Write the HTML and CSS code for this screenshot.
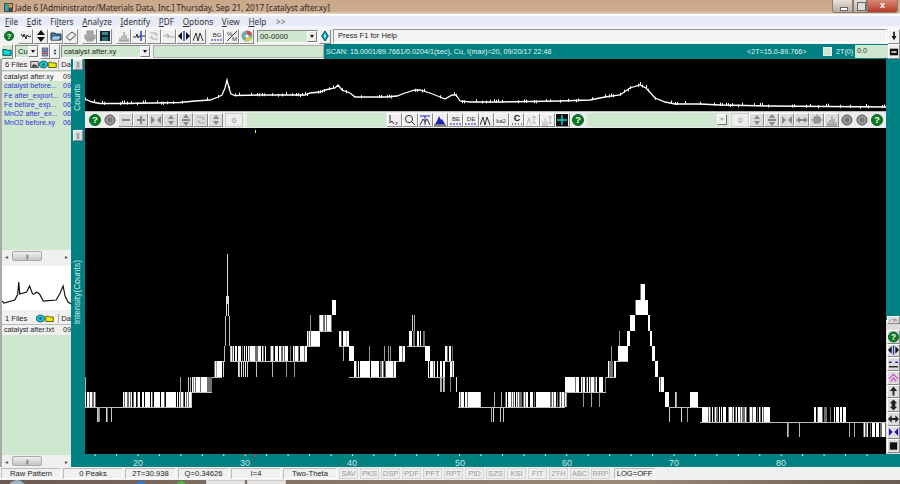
FILE: index.html
```html
<!DOCTYPE html>
<html lang="en">
<head>
    <meta charset="UTF-8">
    <title>Jade 6 [Administrator/Materials Data, Inc.]</title>
    <link rel="stylesheet" href="styles.css">
</head>
<body>
    <!-- shared toolbar icons -->
    <svg class="defs" xmlns="http://www.w3.org/2000/svg">
        <symbol id="help" viewBox="0 0 12 12"><circle cx="6" cy="6" r="5.5" fill="#0b7a1c" stroke="#063"/><text x="6" y="9.4" text-anchor="middle" class="ic-help">?</text></symbol>
        <symbol id="wave" viewBox="0 0 12 12"><path d="M1 4l2 3 1-3 2 5 1-4 2 2 2-1" fill="none" stroke="#222"/></symbol>
        <symbol id="updown" viewBox="0 0 12 12"><path d="M6 0l4 5H2zM6 12l4-5H2z" fill="#111"/></symbol>
        <symbol id="folder" viewBox="0 0 12 12"><path d="M1 3h4l1 1h5v6H1z" fill="#3a7fa8" stroke="#234"/><path d="M3 6h8l-2 4H1z" fill="#a8d0e8" stroke="#234" stroke-width=".5"/></symbol>
        <symbol id="eraser" viewBox="0 0 12 12"><path d="M1 7l6-5 4 3-6 5z" fill="#eee" stroke="#555"/><path d="M1 7l4 3 6-5v1l-6 5-4-3z" fill="#999"/></symbol>
        <symbol id="printer" viewBox="0 0 12 12"><path d="M3 1h6v3H3zM1 5h10v4H1zM3 8h6v3H3z" fill="#aaa" stroke="#999"/></symbol>
        <symbol id="disk" viewBox="0 0 12 12"><path d="M1 1h10v10H1z" fill="#123"/><path d="M3 2h6v3H3z" fill="#3a8a8a"/><path d="M3 7h6v4H3z" fill="#2a6a6a"/></symbol>
        <symbol id="bars" viewBox="0 0 12 12"><path d="M1 11h10M2 11V8M4 11V6M6 11V2M8 11V5M10 11V8" fill="none" stroke="#888"/></symbol>
        <symbol id="wave-blue" viewBox="0 0 12 12"><path d="M0 7h3l1-3 1 4 1-2h6" fill="none" stroke="#333"/><path d="M8 1v10" stroke="#2233cc" stroke-width="1.4"/></symbol>
        <symbol id="cycle" viewBox="0 0 12 12"><path d="M2 3h6v3l2-2M10 9H4V6L2 8" fill="none" stroke="#aaa"/></symbol>
        <symbol id="wave-gray" viewBox="0 0 12 12"><path d="M0 6h3l1-2 1 4 1-3 1 2h5" fill="none" stroke="#aaa"/></symbol>
        <symbol id="lr-blue" viewBox="0 0 12 12"><path d="M0 6l4-4v8zM12 6L8 2v8z" fill="#111"/><path d="M6 1v10" stroke="#2233cc" stroke-width="1.4"/></symbol>
        <symbol id="peaks" viewBox="0 0 12 12"><path d="M0 11l3-8 2 8 2-8 3 8" fill="none" stroke="#333"/></symbol>
        <symbol id="bg" viewBox="0 0 12 12"><text x="6" y="7" text-anchor="middle" class="ic-txt">BG</text><path d="M0 10h12" stroke="#22c" stroke-dasharray="2 1"/></symbol>
        <symbol id="percent" viewBox="0 0 12 12"><path d="M1 11L11 1" stroke="#444"/><text x="1" y="6" class="ic-txt">%</text><text x="6" y="11" class="ic-txt">M</text></symbol>
        <symbol id="cd" viewBox="0 0 12 12"><circle cx="6" cy="6" r="5.5" fill="#7aa"/><path d="M6 6L6 .5A5.5 5.5 0 0 1 11 4z" fill="#d44"/><path d="M6 6L11 8A5.5 5.5 0 0 1 4 11z" fill="#dc4"/><circle cx="6" cy="6" r="1.6" fill="#fff"/></symbol>
        <symbol id="diamond" viewBox="0 0 12 12"><path d="M6 0l4 6-4 6-4-6z" fill="#0aa" stroke="#034"/><path d="M6 3l1.5 3L6 9 4.5 6z" fill="#aff"/></symbol>
        <symbol id="arrow-down" viewBox="0 0 12 12"><path d="M5 1h2v5h2l-3 5-3-5h2z" fill="#111"/></symbol>
        <symbol id="arrow-up" viewBox="0 0 12 12"><path d="M5 11h2V6h3L6 1 2 6h3z" fill="#222"/></symbol>
        <symbol id="folder-teal" viewBox="0 0 12 12"><path d="M1 3h4l1 1h5v6H1z" fill="#0dd" stroke="#033"/></symbol>
        <symbol id="book" viewBox="0 0 12 12"><path d="M2 0h8v12H2z" fill="#9ab" stroke="#234"/><path d="M3 3h6M3 5h6" stroke="#33c"/><path d="M3 8h6" stroke="#c33" stroke-width="2"/></symbol>
        <symbol id="spin" viewBox="0 0 12 12"><path d="M6 2l2 3H4zM6 10l2-3H4z" fill="#111"/></symbol>
        <symbol id="photo" viewBox="0 0 12 12"><path d="M1 2h10v8H1z" fill="#ddd" stroke="#222"/><path d="M2 9l3-4 2 2 1-1 2 3z" fill="#333"/></symbol>
        <symbol id="eye" viewBox="0 0 12 12"><ellipse cx="6" cy="6" rx="5.5" ry="4.5" fill="#1cc" stroke="#034"/><circle cx="6" cy="6" r="1.6" fill="#037"/></symbol>
        <symbol id="folder-yellow" viewBox="0 0 12 12"><path d="M1 3h4l1 1h5v6H1z" fill="#ee0" stroke="#330"/></symbol>
        <symbol id="rail" viewBox="0 0 12 12"><path d="M4 3h4M4 6h4M4 9h4" stroke="#333"/></symbol>
        <symbol id="ring" viewBox="0 0 12 12"><circle cx="6" cy="6" r="5" fill="#999" stroke="#555"/><circle cx="6" cy="6" r="2.4" fill="#777"/></symbol>
        <symbol id="minus" viewBox="0 0 12 12"><path d="M2 5h8v2H2z" fill="#888"/></symbol>
        <symbol id="plus" viewBox="0 0 12 12"><path d="M5 2h2v3h3v2H7v3H5V7H2V5h3z" fill="#888"/></symbol>
        <symbol id="lr" viewBox="0 0 12 12"><path d="M5 6L1 2v8zM7 6l4-4v8z" fill="#888"/></symbol>
        <symbol id="ud" viewBox="0 0 12 12"><path d="M6 1l3 4H3zM6 11l3-4H3z" fill="#888"/></symbol>
        <symbol id="udbar" viewBox="0 0 12 12"><path d="M6 0l3 4H3zM6 12l3-4H3zM2 5h8v2H2z" fill="#888"/></symbol>
        <symbol id="lrbar" viewBox="0 0 12 12"><path d="M0 6l4-3v6zM12 6L8 3v6zM4 5h4v2H4z" fill="#888"/></symbol>
        <symbol id="box" viewBox="0 0 12 12"><path d="M3 3h6v6H3zM0 6h3M9 6h3M6 0v3" fill="#999" stroke="#888"/></symbol>
        <symbol id="cursor" viewBox="0 0 12 12"><path d="M1 1v8l2-2 2 3" fill="none" stroke="#333"/><text x="6" y="11" class="ic-txt">z</text></symbol>
        <symbol id="zoom" viewBox="0 0 12 12"><circle cx="5" cy="5" r="3.6" fill="none" stroke="#333"/><path d="M8 8l3 3" stroke="#333"/></symbol>
        <symbol id="tee" viewBox="0 0 12 12"><path d="M1 2h10M6 2v9" stroke="#22c"/><path d="M1 11l3-6 2 3 2-3 3 6" fill="none" stroke="#333"/></symbol>
        <symbol id="hill" viewBox="0 0 12 12"><path d="M1 10l2-3 2-5 2 4 1-1 3 5z" fill="#2222bb"/><path d="M0 11h12" stroke="#111"/></symbol>
        <symbol id="be" viewBox="0 0 12 12"><text x="6" y="7" text-anchor="middle" class="ic-txt">BE</text><path d="M0 10h12" stroke="#22c" stroke-dasharray="2 1"/></symbol>
        <symbol id="de" viewBox="0 0 12 12"><text x="6" y="7" text-anchor="middle" class="ic-txt">DE</text><path d="M0 10h12" stroke="#22c" stroke-dasharray="2 1"/></symbol>
        <symbol id="ka" viewBox="0 0 12 12"><text x="6" y="9" text-anchor="middle" class="ic-txt">ka2</text></symbol>
        <symbol id="clabel" viewBox="0 0 12 12"><text x="6" y="7" text-anchor="middle" class="ic-bold">C</text><path d="M1 10h10" stroke="#111" stroke-dasharray="1 2"/></symbol>
        <symbol id="at-gray" viewBox="0 0 12 12"><path d="M1 11l2-7 2 7M8 2v8M6 4l2-2 2 2M6 8l2 2 2-2" fill="none" stroke="#bbb"/></symbol>
        <symbol id="lt-gray" viewBox="0 0 12 12"><path d="M1 11h6M2 11V7M4 11V4M6 11V7M9 2v8M7.500 4L9 2l1.500 2M7.500 8L9 10l1.500-2" fill="none" stroke="#bbb"/></symbol>
        <symbol id="grid" viewBox="0 0 12 12"><path d="M0 0h12v12H0z" fill="#111"/><path d="M6 1v10M1 6h10" stroke="#1cc" stroke-width="1.4"/></symbol>
        <symbol id="gauge" viewBox="0 0 12 12"><path d="M1 8q5-6 10 0" fill="none" stroke="#999"/><path d="M6 8l3-3" stroke="#c33"/></symbol>
        <symbol id="lines-yellow" viewBox="0 0 12 12"><path d="M1 4h3M8 4h3" stroke="#22c" stroke-width="1.6"/><path d="M1 9h10" stroke="#111" stroke-width="1.4"/></symbol>
        <symbol id="chevron-pink" viewBox="0 0 12 12"><path d="M1 7l5-5 5 5M3 10l3-4 3 4" fill="none" stroke="#c4c" stroke-width="1.3"/></symbol>
        <symbol id="lr-plain" viewBox="0 0 12 12"><path d="M0 6l4-4v8zM12 6L8 2v8zM4 5h4v2H4z" fill="#222"/></symbol>
        <symbol id="lr-b" viewBox="0 0 12 12"><path d="M5 6L1 2v8zM7 6l4-4v8z" fill="#11c"/></symbol>
        <symbol id="ud-bar" viewBox="0 0 12 12"><path d="M6 0l4 4H2zM6 12l4-4H2zM4 4h4v4H4z" fill="#222"/></symbol>
        <symbol id="square" viewBox="0 0 12 12"><path d="M2 2h8v8H2z" fill="#111"/></symbol>
        <symbol id="mini-square" viewBox="0 0 12 12"><path d="M1 2h10v8H1z" fill="#111"/><path d="M3 5h6v2H3z" fill="#ddd"/></symbol>
    </svg>

    <header class="titlebar">
        <svg class="app-icon" viewBox="0 0 10 10"><path d="M0 0h10v10H0z" fill="#445"/><path d="M1 1h4v8H1z" fill="#3a9"/><path d="M5 1h4v4H5z" fill="#d94"/></svg>
        <span class="title-text">Jade 6 [Administrator/Materials Data, Inc.] Thursday, Sep 21, 2017 [catalyst after.xy]</span>
        <div class="win-buttons">
            <span class="win-btn win-min"></span>
            <span class="win-btn win-max"></span>
            <span class="win-btn win-close">x</span>
        </div>
    </header>

    <nav class="menubar">
        <span><u>F</u>ile</span>
        <span><u>E</u>dit</span>
        <span>Fi<u>l</u>ters</span>
        <span><u>A</u>nalyze</span>
        <span><u>I</u>dentify</span>
        <span><u>P</u>DF</span>
        <span><u>O</u>ptions</span>
        <span><u>V</u>iew</span>
        <span><u>H</u>elp</span>
        <span class="menu-more">&gt;&gt;</span>
    </nav>

    <div class="toolbar">
        <button class="btn flat first"><svg><use href="#help"/></svg></button>
        <div class="btn-group gap3">
            <button class="btn"><svg><use href="#wave"/></svg></button>
            <button class="btn"><svg><use href="#updown"/></svg></button>
            <button class="btn"><svg><use href="#folder"/></svg></button>
            <button class="btn"><svg><use href="#eraser"/></svg></button>
        </div>
        <div class="btn-group gap4">
            <button class="btn"><svg><use href="#printer"/></svg></button>
            <button class="btn"><svg><use href="#disk"/></svg></button>
        </div>
        <div class="btn-group gap4">
            <button class="btn"><svg><use href="#bars"/></svg></button>
            <button class="btn"><svg><use href="#wave-blue"/></svg></button>
            <button class="btn"><svg><use href="#cycle"/></svg></button>
            <button class="btn"><svg><use href="#wave-gray"/></svg></button>
            <button class="btn"><svg><use href="#lr-blue"/></svg></button>
            <button class="btn"><svg><use href="#peaks"/></svg></button>
        </div>
        <div class="btn-group gap3">
            <button class="btn"><svg><use href="#bg"/></svg></button>
            <button class="btn"><svg><use href="#percent"/></svg></button>
            <button class="btn"><svg><use href="#cd"/></svg></button>
        </div>
        <div class="combo pdf-combo"><span class="combo-text">00-0000</span><span class="combo-arrow"></span></div>
        <button class="btn small"><svg><use href="#diamond"/></svg></button>
        <div class="help-field">Press F1 for Help</div>
        <button class="btn small"><svg><use href="#arrow-down"/></svg></button>
    </div>

    <div class="filebar">
        <button class="btn small first-file"><svg><use href="#folder-teal"/></svg></button>
        <div class="combo cu-combo"><span class="combo-text">Cu</span><span class="combo-arrow"></span></div>
        <button class="btn tiny"><svg><use href="#book"/></svg></button>
        <button class="btn tiny"><svg><use href="#spin"/></svg></button>
        <div class="combo file-combo"><span class="combo-text">catalyst after.xy</span><span class="combo-arrow"></span></div>
        <div class="green-field"></div>
        <div class="scan-bar">
            <span class="scan-text">SCAN: 15.0001/89.7661/0.0204/1(sec), Cu, I(max)=20, 09/20/17 22:48</span>
            <span class="scan-range">&lt;2T=15.0-89.766&gt;</span>
            <span class="scan-check"></span>
            <span class="scan-label">2T(0)</span>
            <span class="scan-input">0.0</span>
            <button class="btn small"><svg><use href="#mini-square"/></svg></button>
        </div>
    </div>

    <main class="workspace">
        <aside class="side">
            <div class="list-head">
                <span class="head-name">6 Files <svg><use href="#photo"/></svg><svg><use href="#eye"/></svg><svg><use href="#folder-yellow"/></svg></span>
                <span class="head-date">Da</span>
            </div>
            <ul class="file-list top-list">
                <li class="selected"><span>catalyst after.xy</span><span class="date">09</span></li>
                <li><span>catalyst before...</span><span class="date">09</span></li>
                <li><span>Fe after_export...</span><span class="date">09</span></li>
                <li><span>Fe before_exp...</span><span class="date">06</span></li>
                <li><span>MnO2 after_ex...</span><span class="date">06</span></li>
                <li><span>MnO2 before.xy</span><span class="date">06</span></li>
            </ul>
            <div class="hscroll"><span class="hs-arrow">◂</span><span class="hs-thumb">⦀</span><span class="hs-arrow">▸</span></div>
            <div class="preview">
                <svg viewBox="0 0 70 44" preserveAspectRatio="none"><polyline points="0,35 2,37 13,34 16,28 17,16 18,28 25,26 28,20 31,28 33,28 35,26 38,28 42,35 55,34 59,27 62,20 64,30 67,36 70,38" fill="none" stroke="#111" stroke-width="1.2"/></svg>
            </div>
            <div class="list-head second">
                <span class="head-name">1 Files <span class="head-icons"><svg><use href="#eye"/></svg><svg><use href="#folder-yellow"/></svg></span></span>
                <span class="head-date">Da</span>
            </div>
            <ul class="file-list bottom-list">
                <li class="plain"><span>catalyst after.txt</span><span class="date">09</span></li>
            </ul>
            <div class="hscroll"><span class="hs-arrow">◂</span><span class="hs-thumb">⦀</span><span class="hs-arrow">▸</span></div>
        </aside>

        <div class="rail">
            <button class="btn rail-btn"><svg><use href="#rail"/></svg></button>
            <span class="rail-label counts">Counts</span>
            <button class="btn rail-btn rail-second"><svg><use href="#rail"/></svg></button>
            <span class="rail-label intensity">Intensity(Counts)</span>
        </div>

        <section class="center">
            <canvas class="overview" id="overview" width="801" height="52"></canvas>
            <div class="chart-tools">
                <button class="btn flat"><svg><use href="#help"/></svg></button>
                <button class="btn flat"><svg><use href="#ring"/></svg></button>
                <button class="btn grey ml"><svg><use href="#minus"/></svg></button>
                <button class="btn grey"><svg><use href="#plus"/></svg></button>
                <button class="btn grey"><svg><use href="#lr"/></svg></button>
                <button class="btn grey"><svg><use href="#ud"/></svg></button>
                <button class="btn grey"><svg><use href="#udbar"/></svg></button>
                <button class="btn grey"><svg><use href="#cycle"/></svg></button>
                <button class="btn grey"><svg><use href="#ud"/></svg></button>
                <span class="zero-field">0</span>
                <div class="tool-green"></div>
                <div class="btn-group mode-group">
                    <button class="btn"><svg><use href="#cursor"/></svg></button>
                    <button class="btn"><svg><use href="#zoom"/></svg></button>
                    <button class="btn"><svg><use href="#tee"/></svg></button>
                    <button class="btn"><svg><use href="#hill"/></svg></button>
                    <button class="btn"><svg><use href="#be"/></svg></button>
                    <button class="btn"><svg><use href="#de"/></svg></button>
                    <button class="btn"><svg><use href="#peaks"/></svg></button>
                    <button class="btn"><svg><use href="#ka"/></svg></button>
                    <button class="btn"><svg><use href="#clabel"/></svg></button>
                    <button class="btn"><svg><use href="#at-gray"/></svg></button>
                    <button class="btn"><svg><use href="#lt-gray"/></svg></button>
                    <button class="btn"><svg><use href="#grid"/></svg></button>
                    <button class="btn flat"><svg><use href="#help"/></svg></button>
                </div>
                <div class="tool-green wide"><span class="combo-arrow off"></span></div>
                <span class="zero-field">0</span>
                <button class="btn grey"><svg><use href="#ud"/></svg></button>
                <button class="btn grey"><svg><use href="#udbar"/></svg></button>
                <button class="btn grey"><svg><use href="#lr"/></svg></button>
                <button class="btn grey"><svg><use href="#lrbar"/></svg></button>
                <button class="btn grey"><svg><use href="#box"/></svg></button>
                <button class="btn grey"><svg><use href="#bars"/></svg></button>
                <button class="btn flat"><svg><use href="#ring"/></svg></button>
                <button class="btn flat"><svg><use href="#ring"/></svg></button>
                <button class="btn flat"><svg><use href="#help"/></svg></button>
            </div>
            <canvas class="plot" id="plot" width="801" height="324"></canvas>
        </section>

        <div class="right-rail">
            <button class="btn side-btn short"><svg><use href="#gauge"/></svg></button>
            <button class="btn side-btn"><svg><use href="#help"/></svg></button>
            <button class="btn side-btn"><svg><use href="#lr-blue"/></svg></button>
            <button class="btn side-btn"><svg><use href="#lines-yellow"/></svg></button>
            <button class="btn side-btn"><svg><use href="#chevron-pink"/></svg></button>
            <button class="btn side-btn"><svg><use href="#arrow-up"/></svg></button>
            <button class="btn side-btn"><svg><use href="#ud-bar"/></svg></button>
            <button class="btn side-btn"><svg><use href="#lr-plain"/></svg></button>
            <button class="btn side-btn"><svg><use href="#lr-b"/></svg></button>
            <button class="btn side-btn"><svg><use href="#square"/></svg></button>
        </div>

        <svg class="axis" viewBox="0 0 815 13">
            <path id="axisTicks" d="" stroke="#cfe" fill="none"/>
            <path d="M170 0v3" stroke="#e33" stroke-width="1.2"/>
            <text x="53" y="12">20</text>
            <text x="160" y="12">30</text>
            <text x="267" y="12">40</text>
            <text x="375" y="12">50</text>
            <text x="482" y="12">60</text>
            <text x="589" y="12">70</text>
            <text x="696" y="12">80</text>
        </svg>
    </main>

    <footer class="statusbar">
        <span class="cell c60">Raw Pattern</span>
        <span class="cell c60">0 Peaks</span>
        <span class="cell c51">2T=30.938</span>
        <span class="cell c51">Q=0.34626</span>
        <span class="cell c50">I=4</span>
        <span class="cell c53">Two-Theta</span>
        <span class="cell off">SAV</span>
        <span class="cell off">PKS</span>
        <span class="cell off">DSP</span>
        <span class="cell off">PDF</span>
        <span class="cell off">PFT</span>
        <span class="cell off">RPT</span>
        <span class="cell off">PID</span>
        <span class="cell off">SZS</span>
        <span class="cell off">KSI</span>
        <span class="cell off">FIT</span>
        <span class="cell off">2TH</span>
        <span class="cell off">ABC</span>
        <span class="cell off">RRP</span>
        <span class="cell log">LOG=OFF</span>
    </footer>

    <div class="taskbar">
        <span class="orb"></span>
        <span class="task-dot blue"></span>
        <span class="task-dot green"></span>
        <span class="task-tab"></span>
        <span class="task-tab"></span>
    </div>

    <script src="chart.js"></script>
</body>
</html>
```

FILE: styles.css
```css
/* General Styles */
* {
    box-sizing: border-box;
}

html, body {
    margin: 0;
    padding: 0;
    height: 484px;
    overflow: hidden;
}

body {
    width: 900px;
    display: flex;
    flex-direction: column;
    background: #f0f0f0;
    font-family: 'Liberation Sans', Arial, sans-serif;
    font-size: 7.6px;
    color: #222;
}

.defs {
    position: absolute;
    width: 0;
    height: 0;
}

.ic-help {
    font: bold 9px 'Liberation Sans', sans-serif;
    fill: #fff;
}

.ic-txt {
    font: 6px 'Liberation Sans', sans-serif;
    fill: #333;
}

.ic-bold {
    font: bold 9px 'Liberation Sans', sans-serif;
    fill: #111;
}

/* Title and menu */
.titlebar {
    height: 14px;
    display: flex;
    align-items: center;
    padding-left: 4px;
    background: linear-gradient(#c9a78a, #d0ad8e 80%, #e6d7c8);
}

.app-icon {
    width: 9px;
    height: 9px;
    margin-right: 2px;
}

.title-text {
    font-family: 'Noto Sans', sans-serif;
    font-size: 8.1px;
    color: #2a2a2a;
    white-space: nowrap;
}

.win-buttons {
    margin-left: auto;
    margin-right: 2px;
    display: flex;
    align-self: flex-start;
    height: 13px;
}

.win-btn {
    height: 13px;
    border: 1px solid #8a7a70;
    border-top: none;
    background: linear-gradient(#e8e0d8, #b8aca2);
}

.win-min {
    width: 21px;
    border-radius: 0 0 0 3px;
    position: relative;
}

.win-min::after {
    content: "";
    position: absolute;
    left: 7px;
    top: 7px;
    width: 6px;
    height: 2px;
    background: #fff;
    border: 1px solid #666;
}

.win-max {
    width: 14px;
    position: relative;
}

.win-max::after {
    content: "";
    position: absolute;
    left: 3px;
    top: 2px;
    width: 7px;
    height: 7px;
    border: 1px solid #666;
    background: #ddd;
}

.win-close {
    width: 31px;
    border-radius: 0 0 3px 0;
    background: linear-gradient(#d88a78, #b83a28);
    color: #fff;
    text-align: center;
    font-weight: bold;
    font-size: 9px;
    line-height: 10px;
}

.menubar {
    height: 14px;
    display: flex;
    align-items: center;
    gap: 8.7px;
    padding-left: 5px;
    background: linear-gradient(#fff 8%, #e6eaf6 20%, #e8ecf8 85%, #fff);
    font-family: 'Noto Sans', sans-serif;
    font-size: 8.2px;
    color: #333;
}

.menu-more {
    margin-left: 1px;
    color: #555;
}

/* Buttons */
.btn {
    width: 15px;
    height: 15px;
    flex: none;
    padding: 0;
    display: flex;
    align-items: center;
    justify-content: center;
    background: #f0f0f0;
    border: 1px solid;
    border-color: #fff #888 #888 #fff;
}

.btn svg {
    width: 12px;
    height: 12px;
    display: block;
}

.btn.flat {
    border-color: transparent;
    background: transparent;
}

.btn.grey {
    background: #dcdcdc;
}

.btn.small {
    width: 12px;
}

.btn.tiny {
    width: 10px;
}

.btn.tiny svg,
.btn.small svg {
    width: 10px;
}

.btn-group {
    display: flex;
}

.gap3 {
    margin-left: 3px;
}

.gap4 {
    margin-left: 4px;
}

.toolbar {
    height: 16px;
    display: flex;
    align-items: center;
    padding-left: 3px;
    background: #f0f0f0;
}

.first {
    width: 12px;
}

.first svg {
    width: 12px;
}

.combo {
    display: flex;
    align-items: center;
    height: 13px;
    background: #cfe6cf;
    border: 1px solid #888;
    border-right-color: #fff;
    border-bottom-color: #fff;
}

.combo-text {
    flex: 1;
    padding-left: 2px;
    white-space: nowrap;
    overflow: hidden;
}

.combo-arrow {
    width: 10px;
    height: 11px;
    background: #eee;
    border: 1px solid;
    border-color: #fff #777 #777 #fff;
    position: relative;
    flex: none;
}

.combo-arrow::after {
    content: "";
    position: absolute;
    left: 2px;
    top: 3px;
    border: 2.500px solid transparent;
    border-top: 3px solid #111;
}

.combo-arrow.off {
    margin-left: auto;
    margin-right: 2px;
}

.combo-arrow.off::after {
    border-top-color: #aaa;
}

.pdf-combo {
    width: 61px;
    margin-left: 3px;
    margin-right: 1px;
}

.help-field {
    width: 554px;
    height: 14px;
    margin: 0 1px 0 2px;
    padding-left: 4px;
    line-height: 12px;
    border: 1px solid #999;
    border-right-color: #fff;
    border-bottom-color: #fff;
    background: #f4f4f4;
}

.filebar {
    height: 15px;
    display: flex;
    align-items: center;
    background: #f0f0f0;
}

.first-file {
    margin-left: 1px;
    background: #cfe6cf;
}

.cu-combo {
    width: 24px;
    margin: 0 1px 0 2px;
}

.file-combo {
    width: 90px;
    margin-left: 1px;
    background: #cfe6cf;
}

.green-field {
    width: 171px;
    height: 13px;
    margin-left: 2px;
    background: #cfe6cf;
    border: 1px solid #aaa;
}

.scan-bar {
    flex: 1;
    height: 15px;
    display: flex;
    align-items: center;
    padding-left: 2px;
    background: #008080;
    color: #e4f4f4;
    font-size: 7.2px;
    white-space: nowrap;
}

.scan-text {
    width: 421px;
}

.scan-range {
    width: 76px;
}

.scan-check {
    width: 9px;
    height: 9px;
    background: #d0e8d0;
    border: 1px solid #eee;
}

.scan-label {
    margin-left: 4px;
    width: 19px;
}

.scan-input {
    width: 33px;
    height: 13px;
    padding-left: 2px;
    background: #cfe6cf;
    color: #333;
    line-height: 12px;
}

/* Main grid */
.workspace {
    height: 408px;
    display: grid;
    grid-template-columns: 71px 14px 801px 14px;
    grid-template-rows: 395px 13px;
    background: #008080;
}

.side {
    grid-row: 1 / 3;
    display: flex;
    flex-direction: column;
    border-left: 2px solid #aaa;
    background: #f0f0f0;
}

.list-head {
    height: 12px;
    flex: none;
    display: flex;
    align-items: center;
    background: #f0f0f0;
    border-bottom: 1px solid #bbb;
}

.list-head.second {
    margin-top: 3px;
}

.head-name {
    width: 58px;
    display: flex;
    align-items: center;
    padding-left: 3px;
    border-right: 1px solid #aaa;
    white-space: nowrap;
}

.head-name svg {
    width: 9px;
    height: 9px;
}

.head-name svg:first-of-type {
    margin-left: 3px;
}

.head-icons {
    display: flex;
    margin-left: 6px;
}

.head-date {
    padding-left: 2px;
}

.file-list {
    list-style: none;
    margin: 0;
    padding: 0;
    background: #cfe6cf;
    color: #3333dd;
    overflow: hidden;
}

.top-list {
    height: 179px;
    flex: none;
    padding-top: 1px;
}

.bottom-list {
    flex: 1;
}

.file-list li {
    height: 9.300px;
    display: flex;
    justify-content: space-between;
    padding-left: 2px;
    line-height: 9px;
    font-size: 7.200px;
    white-space: nowrap;
}

.file-list li.selected {
    background: #f4f4f4;
    color: #222;
}

.file-list li.plain {
    color: #222;
    height: 10px;
    background: #f0f0f0;
}

.file-list .date {
    width: 8px;
    overflow: hidden;
}

.hscroll {
    height: 12px;
    flex: none;
    display: flex;
    align-items: center;
    justify-content: space-between;
    padding: 0 3px;
    background: #f0f0f0;
    color: #555;
    font-size: 6px;
}

.hs-thumb {
    width: 30px;
    height: 10px;
    margin: 0 auto 0 4px;
    text-align: center;
    line-height: 10px;
    background: linear-gradient(#f0f0f0, #c4c4c4);
    border: 1px solid #aaa;
    border-radius: 2px;
}

.preview {
    height: 44px;
    flex: none;
    margin-top: 4px;
    background: #fff;
}

.preview svg {
    width: 100%;
    height: 100%;
    display: block;
}

.rail {
    grid-row: 1 / 3;
    position: relative;
    background: #008080;
}

.rail-btn {
    position: absolute;
    left: 2px;
    top: 0;
    width: 10px;
    height: 11px;
    background: #ddd;
}

.rail-btn.rail-second {
    top: 71px;
}

.rail-label {
    position: absolute;
    left: 1px;
    writing-mode: vertical-rl;
    transform: rotate(180deg);
    color: #cfe6e6;
    font-size: 8.500px;
    white-space: nowrap;
}

.counts {
    top: 25px;
}

.intensity {
    top: 201px;
}

.center {
    display: flex;
    flex-direction: column;
    background: #000;
}

.overview,
.plot {
    display: block;
    flex: none;
}

.chart-tools {
    height: 19px;
    flex: none;
    display: flex;
    align-items: center;
    padding: 0 0 2px 2px;
    background: linear-gradient(#bbb 0, #bbb 1px, #ececec 1px, #ececec 17px, #000 17px);
}

.chart-tools .btn {
    height: 14px;
}

.chart-tools .ml {
    margin-left: 1px;
}

.mode-group .btn {
    width: 15.250px;
}

.zero-field {
    width: 18px;
    height: 14px;
    margin-left: 2px;
    text-align: center;
    line-height: 13px;
    color: #888;
    background: #eee;
    border: 1px solid #ccc;
}

.tool-green {
    width: 139px;
    height: 14px;
    margin: 0 1px 0 4px;
    display: flex;
    align-items: center;
    background: #cfe6cf;
}

.tool-green.wide {
    width: 142px;
    margin: 0 0 0 2px;
}

.right-rail {
    display: flex;
    flex-direction: column;
    align-items: center;
    justify-content: flex-end;
    background: linear-gradient(#008080 261px, #dcdcdc 261px);
    padding-bottom: 1px;
}

.side-btn {
    width: 13px;
    height: 13.700px;
    background: #ddd;
}

.side-btn.short {
    height: 8px;
    margin-bottom: 6px;
}

.axis {
    grid-column: 3 / 5;
    width: 815px;
    height: 13px;
    display: block;
}

.axis text {
    font: 9px 'Liberation Sans', sans-serif;
    fill: #cfe6e6;
    text-anchor: middle;
}

/* Status bar and desktop */
.statusbar {
    height: 13px;
    flex: none;
    display: flex;
    gap: 2px;
    padding: 1px 0 0 1px;
    background: #f0f0f0;
}

.cell {
    height: 11px;
    text-align: center;
    line-height: 10px;
    border: 1px solid #ccc;
    border-color: #bbb #fff #fff #bbb;
}

.c60 { width: 60px; }
.c51 { width: 51px; }
.c50 { width: 50px; }
.c53 { width: 54px; }

.cell.off {
    width: 19px;
    color: #999;
    background: #eee;
    border: 1px solid #d4d4d4;
}

.cell.log {
    width: 41px;
    margin-left: 2px;
}

.taskbar {
    flex: 1;
    display: flex;
    align-items: flex-start;
    padding-left: 8px;
    background: linear-gradient(90deg, #6b5a52, #8a7868 40%, #9a8a78 70%, #6a5c50);
    overflow: hidden;
}

.orb {
    width: 18px;
    height: 18px;
    border-radius: 50%;
    background: #9ab4c8;
}

.task-dot {
    width: 10px;
    height: 10px;
    margin-top: 1px;
    border-radius: 50%;
}

.task-dot.blue {
    margin-left: 110px;
    background: #2a7fd8;
}

.task-dot.green {
    margin-left: 30px;
    background: #5ab04a;
}

.task-tab {
    width: 39px;
    height: 8px;
    margin-left: 2px;
    background: #e4e4e4;
    border: 1px solid #ccc;
}

.task-tab:nth-of-type(4) {
    margin-left: 20px;
}
```

FILE: chart.js
```js
// Draws the two scan traces and the axis ticks
var seed = 7;
function rnd() {
    seed = (seed * 16807) % 2147483647;
    return seed / 2147483647;
}

// intensity steps, page y of each count
var L0 = 437, L1 = 422, L2 = 407, L3 = 392, L4 = 377, L5 = 361, L6 = 346, L7 = 331, L8 = 315, L9 = 300, L10 = 284;

// x0, x1, top, bottom, fill density
var bands = [
    [85, 96, L3, L2, 0.6],
    [123, 180, L3, L2, 0.65],
    [180, 192, L3, L2, 0.55],
    [192, 212, L4, L3, 0.85],
    [214, 222, L5, L4, 0.7],
    [230, 307, L6, L5, 0.62],
    [307, 320, L7, L6, 0.75],
    [320, 332, L8, L7, 0.85],
    [332, 336, L9, L8, 0.7],
    [339, 350, L7, L6, 0.5],
    [349, 354, L6, L5, 0.9],
    [354, 396, L5, L4, 0.72],
    [399, 405, L6, L5, 0.95],
    [407, 425, L7, L6, 0.6],
    [425, 430, L6, L5, 0.9],
    [428, 445, L5, L4, 0.5],
    [445, 453, L6, L5, 0.55],
    [450, 455, L5, L4, 0.5],
    [459, 480, L3, L2, 0.75],
    [505, 566, L3, L2, 0.7],
    [565, 606, L4, L3, 0.62],
    [608, 616, L5, L4, 0.75],
    [618, 628, L6, L5, 0.95],
    [627, 630, L7, L6, 0.9],
    [630, 635, L8, L7, 1],
    [635, 648, L9, L8, 0.85],
    [640, 646, L10, L9, 0.7],
    [648, 650, L8, L7, 0.7],
    [650, 652, L7, L6, 0.7],
    [652, 655, L6, L5, 0.7],
    [655, 658, L5, L4, 0.9],
    [659, 664, L4, L3, 0.7],
    [665, 669, L3, L2, 1],
    [690, 698, L3, L2, 0.9],
    [702, 770, L2, L1, 0.6],
    [812, 846, L2, L1, 0.42],
    [863, 886, L1, L0, 0.62]
];

// runs of flat trace: x0, x1, y
var flats = [
    [85, 96, L2], [96, 123, L2], [123, 192, L2], [192, 212, L3], [212, 222, L4],
    [222, 225, L5], [230, 307, L5], [307, 320, L6], [320, 332, L7], [339, 349, L6],
    [349, 396, L4], [396, 405, L5], [407, 425, L6], [428, 445, L4], [445, 453, L5],
    [458, 505, L2], [505, 565, L2], [565, 606, L3], [606, 616, L4], [616, 628, L5],
    [669, 702, L2], [700, 886, L1]
];

// single spikes: x, y0, y1, grey level
var spikes = [
    [85, L4, L3, 170], [97, L2, L1, 200], [98, L2, L1, 170], [99, L2, L1, 140], [106, L2, L1, 220], [107, L2, L1, 120], [111, L2, L1, 200],
    [180, L4, L3, 160], [188, L4, L3, 200], [190, L4, L3, 170], [193, L4, L3, 130], [195, L4, L3, 110], [191, L3, L2, 200],
    [216, L5, L4, 160], [223, L5, L4, 220], [224, L6, L5, 230],
    [238, L5, L4, 230], [239, L5, L4, 180], [241, L5, L4, 230], [243, L5, L4, 210], [245, L5, L4, 230], [247, L5, L4, 210], [256, L5, L4, 190], [272, L5, L4, 180], [286, L5, L4, 150], [294, L5, L4, 150],
    [310, L8, L7, 150], [319, L8, L7, 170], [343, L6, L5, 180], [346, L7, L6, 180],
    [369, L6, L5, 150], [384, L6, L5, 160], [388, L6, L5, 150], [390, L6, L5, 150],
    [412, L8, L7, 200], [414, L8, L7, 170], [440, L4, L3, 180], [441, L4, L3, 160], [443, L4, L3, 200], [444, L4, L3, 160],
    [450, L4, L3, 130], [456, L4, L3, 230],
    [480, L3, L2, 210], [494, L3, L2, 170], [501, L3, L2, 170], [491, L2, L1, 170], [493, L2, L1, 220], [500, L2, L1, 200], [503, L2, L1, 200],
    [583, L3, L2, 150], [591, L3, L2, 170], [599, L3, L2, 150], [566, L3, L2, 150],
    [611, L6, L5, 150], [619, L7, L6, 150],
    [669, L2, L1, 200], [675, L3, L2, 210], [676, L3, L2, 160], [681, L2, L1, 220], [687, L2, L1, 160],
    [787, L1, L0, 190], [788, L1, L0, 130], [799, L1, L0, 180], [849, L1, L0, 170], [854, L1, L0, 170]
];

var plot = document.getElementById('plot').getContext('2d');
plot.translate(-85, -130);
plot.fillStyle = '#000';
plot.fillRect(85, 130, 801, 324);

function grey(v) {
    return 'rgb(' + v + ',' + v + ',' + v + ')';
}

bands.forEach(function(b) {
    for (var x = b[0]; x < b[1]; x++) {
        var r = rnd();
        if (r < b[4]) {
            plot.fillStyle = '#fff';
        } else if (r < b[4] + 0.18) {
            plot.fillStyle = grey(110);
        } else {
            continue;
        }
        plot.fillRect(x, b[2], 1, b[3] - b[2]);
    }
});

plot.fillStyle = grey(190);
flats.forEach(function(f) {
    plot.fillRect(f[0], f[2], f[1] - f[0], 1);
});

spikes.forEach(function(s) {
    plot.fillStyle = grey(s[3]);
    plot.fillRect(s[0], s[1], 1, s[2] - s[1]);
});

// sharp peak near 28 degrees and the steps around it
plot.fillStyle = '#ddd';
plot.fillRect(227, 254, 1, 42);
plot.fillRect(226, 296, 3, 20);
plot.fillStyle = '#000';
plot.fillRect(227, 304, 1, 12);
plot.fillStyle = '#bbb';
plot.fillRect(225, 316, 1, 30);
plot.fillRect(229, 316, 1, 30);
plot.fillRect(230, 346, 1, 15);
plot.fillRect(224, 346, 1, 15);

// yellow cursor mark at the top edge
plot.fillStyle = '#ff0';
plot.fillRect(255, 130, 1, 3);

// overview trace
var over = [
    [85, 99], [92, 102], [100, 103.5], [125, 103.5], [180, 102.5], [195, 101], [210, 100], [218, 97], [222, 95],
    [225, 88], [227, 80], [229, 88], [231, 94], [235, 95.5], [260, 95], [305, 95], [310, 93], [320, 92], [325, 90],
    [335, 88], [338, 85], [342, 90], [350, 93], [355, 97], [385, 97], [397, 96], [405, 93], [415, 90], [420, 90],
    [430, 93], [440, 97], [445, 99], [452, 95], [456, 95], [460, 101], [470, 102], [500, 102], [560, 101], [590, 100],
    [605, 97], [620, 95], [630, 88], [640, 85], [646, 88], [655, 98], [665, 102], [675, 104], [700, 104], [720, 105],
    [770, 106], [886, 107]
];

var overview = document.getElementById('overview').getContext('2d');
overview.translate(-85, -59);
overview.strokeStyle = '#fff';
overview.lineWidth = 1.3;
overview.beginPath();
over.forEach(function(p, i) {
    if (i === 0) {
        overview.moveTo(p[0], p[1]);
    } else {
        overview.lineTo(p[0], p[1]);
    }
});
overview.stroke();

// small noise along the overview
overview.fillStyle = '#fff';
for (var i = 1; i < over.length; i++) {
    var a = over[i - 1], b = over[i];
    for (var x = a[0]; x < b[0]; x += 2) {
        if (rnd() < 0.35) {
            var y = a[1] + (b[1] - a[1]) * (x - a[0]) / (b[0] - a[0]);
            overview.fillRect(x, y - 1 - rnd() * 2, 1, 3);
        }
    }
}

// axis ticks every 2 degrees
var d = '';
for (var t = 16; t <= 88; t += 2) {
    var px = 53 + (t - 20) * 10.72;
    d += 'M' + px.toFixed(1) + ' 0v2';
}
document.getElementById('axisTicks').setAttribute('d', d);
```
